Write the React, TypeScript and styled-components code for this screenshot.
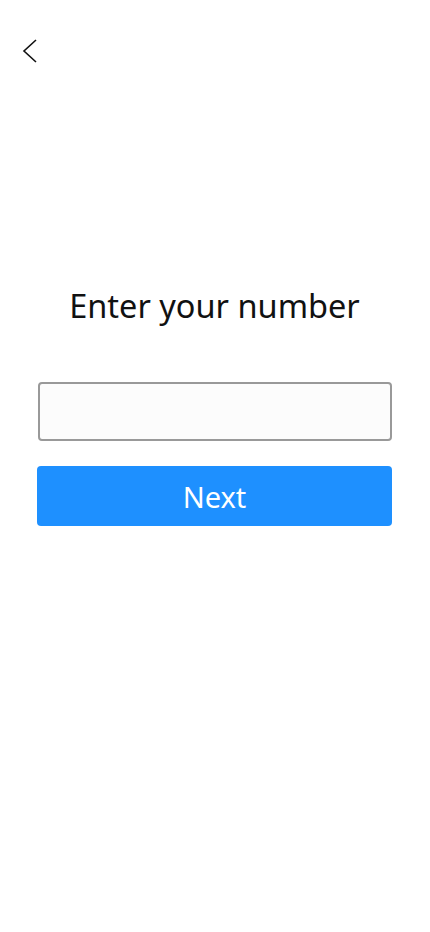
import styled, { createGlobalStyle } from 'styled-components'

const GlobalStyle = createGlobalStyle`
  html, body {
    margin: 0;
    padding: 0;
    background: #ffffff;
    font-family: 'Noto Sans', 'Open Sans', sans-serif;
  }
`

const Screen = styled.div`
  width: 430px;
  min-height: 932px;
  display: flex;
  flex-direction: column;
  background: #fff;
`

const Header = styled.header`
  height: 100px;
  padding: 37px 0 0 18px;
  box-sizing: border-box;
`

const BackButton = styled.button`
  width: 24px;
  height: 28px;
  padding: 0;
  border: 0;
  background: none;
  display: flex;
  align-items: center;
  justify-content: center;
  cursor: pointer;
`

const Form = styled.main`
  display: flex;
  flex-direction: column;
  align-items: stretch;
  padding: 184px 38px 0 37px;
`

const Title = styled.h1`
  margin: 0 0 54px;
  text-align: center;
  font-size: 32.5px;
  font-weight: 400;
  color: #111;
  line-height: 44px;
`

const NumberInput = styled.input`
  height: 59px;
  margin: 0 0 25px 1px;
  box-sizing: border-box;
  border: 2px solid #999;
  border-radius: 4px;
  background: #fcfcfc;
  font-family: inherit;
  font-size: 22px;
  padding: 0 12px;
  outline: none;
`

const NextButton = styled.button`
  height: 60px;
  border: 0;
  border-radius: 4px;
  background: #1e90ff;
  color: #fff;
  font-family: inherit;
  font-size: 29px;
  cursor: pointer;
`

export default function App() {
  return (
    <Screen>
      <GlobalStyle />
      <Header>
        <BackButton aria-label='Back'>
          <svg width='20' height='26' viewBox='0 0 20 26'>
            <path d='M16 2 L4 13 L16 24' fill='none' stroke='#111' strokeWidth='1.6' />
          </svg>
        </BackButton>
      </Header>
      <Form>
        <Title>Enter your number</Title>
        <NumberInput type='tel' />
        <NextButton>Next</NextButton>
      </Form>
    </Screen>
  )
}
